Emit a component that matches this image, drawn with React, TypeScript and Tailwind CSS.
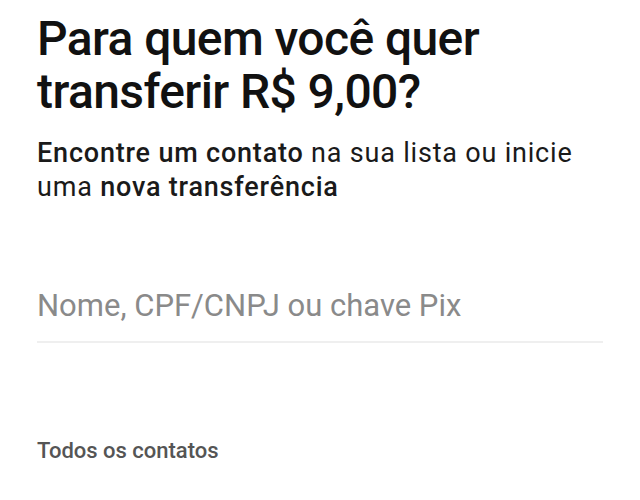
import React from "react";

export default function App() {
  return (
    <div
      className="w-[640px] h-[500px] overflow-hidden bg-white px-[37px] pt-[12px]"
      style={{ fontFamily: "Roboto, 'Liberation Sans', sans-serif" }}
    >
      <h1 className="text-[48px] leading-[53px] font-medium tracking-[-0.6px] text-[#111111]">
        Para quem você quer transferir R$ 9,00?
      </h1>
      <p className="mt-[18px] text-[27px] leading-[34px] tracking-[0.8px] text-[#1a1a1a]">
        <span className="font-medium">Encontre um contato</span> na sua lista ou inicie uma{" "}
        <span className="font-medium">nova transferência</span>
      </p>

      <div className="mt-[83px] border-b-2 border-[#efefef] pb-[16px]">
        <input
          type="text"
          placeholder="Nome, CPF/CNPJ ou chave Pix"
          className="w-full bg-transparent text-[31px] leading-[38px] text-[#111111] placeholder:text-[#8a8a8a] outline-none"
        />
      </div>

      <h2 className="mt-[95px] text-[22px] leading-[26px] font-medium text-[#555555]">
        Todos os contatos
      </h2>
    </div>
  );
}
